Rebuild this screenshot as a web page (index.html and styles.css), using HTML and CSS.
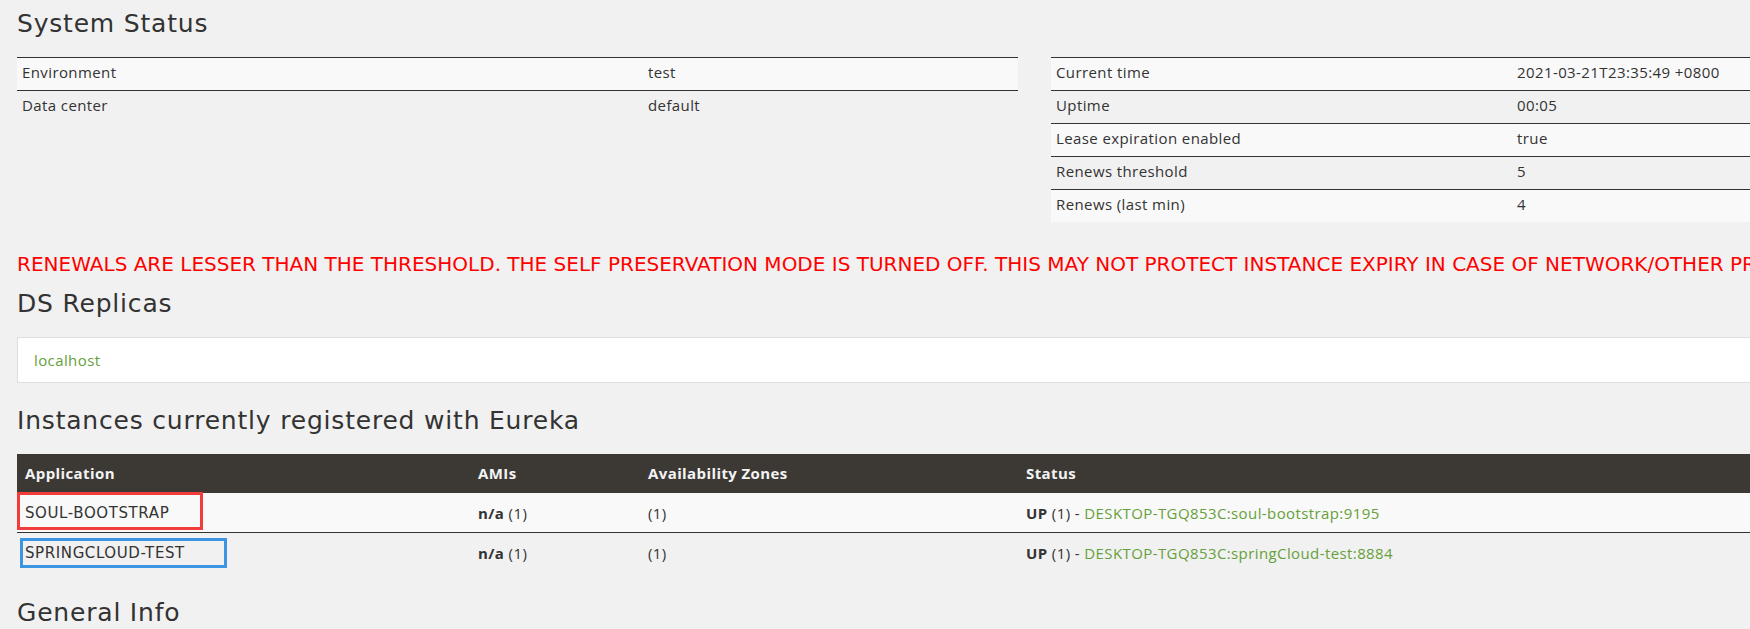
FILE: index.html
```html
<!DOCTYPE html>
<html lang="en">
<head>
<meta charset="utf-8">
<title>Eureka</title>
<link rel="stylesheet" href="styles.css">
</head>
<body>
<div class="page">
  <h1 class="section-title">System Status</h1>
  <div class="status-row">
    <table class="status-table status-left">
      <tbody>
        <tr><td class="label">Environment</td><td>test</td></tr>
        <tr><td class="label">Data center</td><td>default</td></tr>
      </tbody>
    </table>
    <table class="status-table status-right">
      <tbody>
        <tr><td class="label">Current time</td><td>2021-03-21T23:35:49 +0800</td></tr>
        <tr><td class="label">Uptime</td><td>00:05</td></tr>
        <tr><td class="label">Lease expiration enabled</td><td>true</td></tr>
        <tr><td class="label">Renews threshold</td><td>5</td></tr>
        <tr><td class="label">Renews (last min)</td><td>4</td></tr>
      </tbody>
    </table>
  </div>

  <h4 class="warning">RENEWALS ARE LESSER THAN THE THRESHOLD. THE SELF PRESERVATION MODE IS TURNED OFF. THIS MAY NOT PROTECT INSTANCE EXPIRY IN CASE OF NETWORK/OTHER PROBLEMS.</h4>

  <h1 class="section-title">DS Replicas</h1>
  <ul class="replicas">
    <li class="replica-item"><a class="link" href="#">localhost</a></li>
  </ul>

  <h1 class="section-title">Instances currently registered with Eureka</h1>
  <table class="instances">
    <colgroup>
      <col class="c-app"><col class="c-ami"><col class="c-az"><col class="c-status">
    </colgroup>
    <thead>
      <tr><th>Application</th><th>AMIs</th><th>Availability Zones</th><th>Status</th></tr>
    </thead>
    <tbody>
      <tr class="odd">
        <td class="app-cell"><span class="mark mark-red"></span><span class="app-name">SOUL-BOOTSTRAP</span></td>
        <td><b>n/a</b> (1)</td>
        <td>(1)</td>
        <td><b>UP</b> (1) - <a class="link" href="#">DESKTOP-TGQ853C:soul-bootstrap:9195</a></td>
      </tr>
      <tr>
        <td class="app-cell"><span class="mark mark-blue"></span><span class="app-name">SPRINGCLOUD-TEST</span></td>
        <td><b>n/a</b> (1)</td>
        <td>(1)</td>
        <td><b>UP</b> (1) - <a class="link" href="#">DESKTOP-TGQ853C:springCloud-test:8884</a></td>
      </tr>
    </tbody>
  </table>

  <h1 class="section-title general">General Info</h1>
</div>
</body>
</html>
```

FILE: styles.css
```css
html, body {
  margin: 0;
  padding: 0;
  overflow: hidden;
  background: #f1f1f1;
}

body {
  font-family: "Open Sans", "Liberation Sans", sans-serif;
  font-size: 15px;
  line-height: 22px;
  letter-spacing: 0.4px;
  color: #333;
}

.page {
  width: 2035px;
  padding: 9px 0 0 17px;
}

.section-title {
  font-family: "DejaVu Sans", sans-serif;
  font-weight: normal;
  font-size: 25px;
  line-height: 30px;
  letter-spacing: 0.8px;
  color: #333;
  margin: 0 0 18px;
}

.status-row {
  display: flex;
  align-items: flex-start;
  gap: 33px;
  margin-bottom: 30px;
}

.status-table {
  width: 1001px;
  border-collapse: collapse;
  table-layout: fixed;
}

.status-table td {
  padding: 3px 5px 7px;
  border-top: 1px solid #333;
  vertical-align: top;
}

.status-table tr:nth-child(odd) td {
  background: #f9f9f9;
}

.status-left .label { width: 616px; }
.status-right .label { width: 451px; }

.warning {
  font-family: "DejaVu Sans", sans-serif;
  font-weight: normal;
  font-size: 20px;
  line-height: 24px;
  letter-spacing: 0;
  color: #ff0000;
  white-space: nowrap;
  margin: 0 0 13px;
}

.replicas {
  list-style: none;
  margin: 0 0 23px;
  padding: 0;
}

.replica-item {
  background: #fff;
  border: 1px solid #ddd;
  padding: 11px 16px;
}

.link {
  color: #66a03a;
  text-decoration: none;
}

.instances {
  width: 2035px;
  border-collapse: collapse;
  table-layout: fixed;
  margin-top: 1px;
  margin-bottom: 26px;
}

.c-app { width: 453px; }
.c-ami { width: 170px; }
.c-az { width: 378px; }

.instances th {
  background: #3c3934;
  color: #f4f4f4;
  font-weight: bold;
  text-align: left;
  padding: 8px 8px 9px;
}

.instances td {
  padding: 8px;
  border-top: 1px solid #333;
  white-space: nowrap;
}

.instances tbody tr:first-child td {
  border-top: none;
}

.instances tr.odd td {
  background: #f9f9f9;
}

.app-cell {
  position: relative;
}

.app-name {
  font-family: "DejaVu Sans", sans-serif;
  font-size: 15px;
  letter-spacing: 0.6px;
}

.mark {
  position: absolute;
  box-sizing: border-box;
  border: 3px solid;
}

.mark-red {
  border-color: #f23b3b;
  left: 0;
  top: -1px;
  width: 186px;
  height: 38px;
}

.mark-blue {
  border-color: #3b95e0;
  left: 3px;
  top: 5px;
  width: 207px;
  height: 30px;
}

.general {
  margin: 0;
}
```
